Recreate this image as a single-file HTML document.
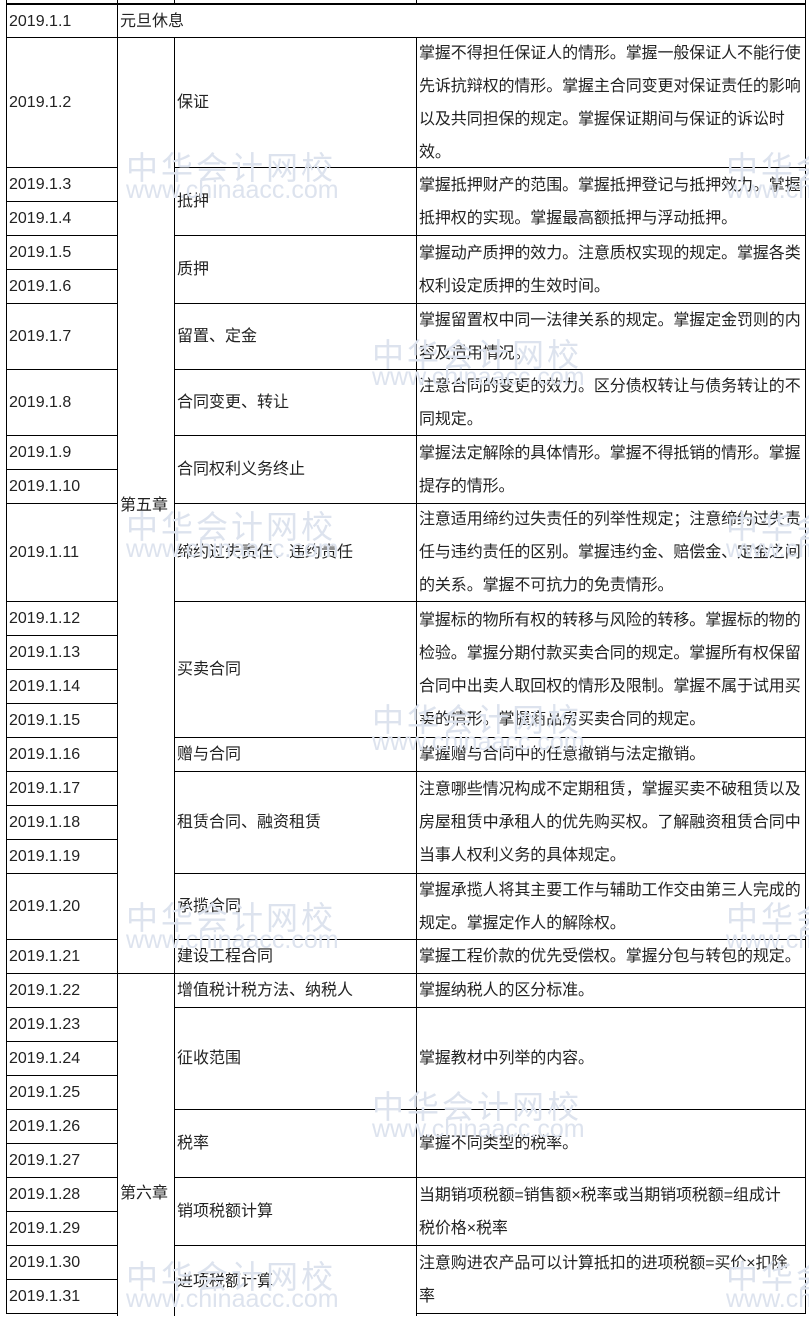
<!DOCTYPE html>
<html style="overflow:hidden;height:1317px"><head><meta charset="utf-8"><style>
body{margin:0;width:809px;height:1317px;overflow:hidden;background:#fff;font-family:"Liberation Sans","Noto Sans CJK SC",sans-serif;color:#222;font-size:16px;position:relative}
.c{position:absolute;border:1px solid #000;box-sizing:border-box;display:flex;align-items:center;padding-left:2px;line-height:33px;margin:-1px 0 0 -1px}
.d{padding-left:2px;padding-right:0;font-size:16px;letter-spacing:-0.1px}
.w{position:absolute;color:#dde3ee;font-size:32px;letter-spacing:3px;z-index:5;pointer-events:none;white-space:nowrap}
.u{position:absolute;color:#dde3ee;font-size:25px;z-index:5;white-space:nowrap}
</style></head><body>
<div class="c" style="left:7px;top:-30px;width:112px;height:35px"></div>
<div class="c" style="left:118px;top:-30px;width:58px;height:35px"></div>
<div class="c" style="left:175px;top:-30px;width:243px;height:35px"></div>
<div class="c" style="left:417px;top:-30px;width:390px;height:35px"></div>

<div class="c" style="left:7px;top:5px;width:112px;height:34px">2019.1.1</div>
<div class="c" style="left:118px;top:5px;width:689px;height:34px">元旦休息</div>

<div class="c" style="left:7px;top:38px;width:112px;height:131px">2019.1.2</div>
<div class="c" style="left:7px;top:168px;width:112px;height:35px">2019.1.3</div>
<div class="c" style="left:7px;top:202px;width:112px;height:35px">2019.1.4</div>
<div class="c" style="left:7px;top:236px;width:112px;height:35px">2019.1.5</div>
<div class="c" style="left:7px;top:270px;width:112px;height:35px">2019.1.6</div>
<div class="c" style="left:7px;top:304px;width:112px;height:67px">2019.1.7</div>
<div class="c" style="left:7px;top:370px;width:112px;height:67px">2019.1.8</div>
<div class="c" style="left:7px;top:436px;width:112px;height:35px">2019.1.9</div>
<div class="c" style="left:7px;top:470px;width:112px;height:35px">2019.1.10</div>
<div class="c" style="left:7px;top:504px;width:112px;height:99px">2019.1.11</div>
<div class="c" style="left:7px;top:602px;width:112px;height:35px">2019.1.12</div>
<div class="c" style="left:7px;top:636px;width:112px;height:35px">2019.1.13</div>
<div class="c" style="left:7px;top:670px;width:112px;height:35px">2019.1.14</div>
<div class="c" style="left:7px;top:704px;width:112px;height:35px">2019.1.15</div>
<div class="c" style="left:7px;top:738px;width:112px;height:35px">2019.1.16</div>
<div class="c" style="left:7px;top:772px;width:112px;height:35px">2019.1.17</div>
<div class="c" style="left:7px;top:806px;width:112px;height:35px">2019.1.18</div>
<div class="c" style="left:7px;top:840px;width:112px;height:35px">2019.1.19</div>
<div class="c" style="left:7px;top:874px;width:112px;height:67px">2019.1.20</div>
<div class="c" style="left:7px;top:940px;width:112px;height:35px">2019.1.21</div>
<div class="c" style="left:7px;top:974px;width:112px;height:35px">2019.1.22</div>
<div class="c" style="left:7px;top:1008px;width:112px;height:35px">2019.1.23</div>
<div class="c" style="left:7px;top:1042px;width:112px;height:35px">2019.1.24</div>
<div class="c" style="left:7px;top:1076px;width:112px;height:35px">2019.1.25</div>
<div class="c" style="left:7px;top:1110px;width:112px;height:35px">2019.1.26</div>
<div class="c" style="left:7px;top:1144px;width:112px;height:35px">2019.1.27</div>
<div class="c" style="left:7px;top:1178px;width:112px;height:35px">2019.1.28</div>
<div class="c" style="left:7px;top:1212px;width:112px;height:35px">2019.1.29</div>
<div class="c" style="left:7px;top:1246px;width:112px;height:35px">2019.1.30</div>
<div class="c" style="left:7px;top:1280px;width:112px;height:35px">2019.1.31</div>

<div class="c" style="left:118px;top:38px;width:58px;height:937px">第五章</div>
<div class="c" style="left:118px;top:974px;width:58px;height:343px;border-bottom:none;align-items:flex-start;padding-top:203px">第六章</div>

<div class="c" style="left:175px;top:38px;width:243px;height:131px">保证</div>
<div class="c" style="left:175px;top:168px;width:243px;height:69px">抵押</div>
<div class="c" style="left:175px;top:236px;width:243px;height:69px">质押</div>
<div class="c" style="left:175px;top:304px;width:243px;height:67px">留置、定金</div>
<div class="c" style="left:175px;top:370px;width:243px;height:67px">合同变更、转让</div>
<div class="c" style="left:175px;top:436px;width:243px;height:69px">合同权利义务终止</div>
<div class="c" style="left:175px;top:504px;width:243px;height:99px">缔约过失责任、违约责任</div>
<div class="c" style="left:175px;top:602px;width:243px;height:137px">买卖合同</div>
<div class="c" style="left:175px;top:738px;width:243px;height:35px">赠与合同</div>
<div class="c" style="left:175px;top:772px;width:243px;height:103px">租赁合同、融资租赁</div>
<div class="c" style="left:175px;top:874px;width:243px;height:67px">承揽合同</div>
<div class="c" style="left:175px;top:940px;width:243px;height:35px">建设工程合同</div>
<div class="c" style="left:175px;top:974px;width:243px;height:35px">增值税计税方法、纳税人</div>
<div class="c" style="left:175px;top:1008px;width:243px;height:103px">征收范围</div>
<div class="c" style="left:175px;top:1110px;width:243px;height:69px">税率</div>
<div class="c" style="left:175px;top:1178px;width:243px;height:69px">销项税额计算</div>
<div class="c" style="left:175px;top:1246px;width:243px;height:71px;border-bottom:none">进项税额计算</div>

<div class="c d" style="left:417px;top:38px;width:390px;height:131px">掌握不得担任保证人的情形。掌握一般保证人不能行使先诉抗辩权的情形。掌握主合同变更对保证责任的影响以及共同担保的规定。掌握保证期间与保证的诉讼时效。</div>
<div class="c d" style="left:417px;top:168px;width:390px;height:69px">掌握抵押财产的范围。掌握抵押登记与抵押效力。掌握抵押权的实现。掌握最高额抵押与浮动抵押。</div>
<div class="c d" style="left:417px;top:236px;width:390px;height:69px">掌握动产质押的效力。注意质权实现的规定。掌握各类权利设定质押的生效时间。</div>
<div class="c d" style="left:417px;top:304px;width:390px;height:67px">掌握留置权中同一法律关系的规定。掌握定金罚则的内容及适用情况。</div>
<div class="c d" style="left:417px;top:370px;width:390px;height:67px">注意合同的变更的效力。区分债权转让与债务转让的不同规定。</div>
<div class="c d" style="left:417px;top:436px;width:390px;height:69px">掌握法定解除的具体情形。掌握不得抵销的情形。掌握提存的情形。</div>
<div class="c d" style="left:417px;top:504px;width:390px;height:99px">注意适用缔约过失责任的列举性规定；注意缔约过失责任与违约责任的区别。掌握违约金、赔偿金、定金之间的关系。掌握不可抗力的免责情形。</div>
<div class="c d" style="left:417px;top:602px;width:390px;height:137px">掌握标的物所有权的转移与风险的转移。掌握标的物的检验。掌握分期付款买卖合同的规定。掌握所有权保留合同中出卖人取回权的情形及限制。掌握不属于试用买卖的情形。掌握商品房买卖合同的规定。</div>
<div class="c d" style="left:417px;top:738px;width:390px;height:35px">掌握赠与合同中的任意撤销与法定撤销。</div>
<div class="c d" style="left:417px;top:772px;width:390px;height:103px">注意哪些情况构成不定期租赁，掌握买卖不破租赁以及房屋租赁中承租人的优先购买权。了解融资租赁合同中当事人权利义务的具体规定。</div>
<div class="c d" style="left:417px;top:874px;width:390px;height:67px">掌握承揽人将其主要工作与辅助工作交由第三人完成的规定。掌握定作人的解除权。</div>
<div class="c d" style="left:417px;top:940px;width:390px;height:35px">掌握工程价款的优先受偿权。掌握分包与转包的规定。</div>
<div class="c d" style="left:417px;top:974px;width:390px;height:35px">掌握纳税人的区分标准。</div>
<div class="c d" style="left:417px;top:1008px;width:390px;height:103px">掌握教材中列举的内容。</div>
<div class="c d" style="left:417px;top:1110px;width:390px;height:69px">掌握不同类型的税率。</div>
<div class="c d" style="left:417px;top:1178px;width:390px;height:69px"><span>当期销项税额=销售额×税率或当期销项税额=组成计<br>税价格×税率</span></div>
<div class="c d" style="left:417px;top:1246px;width:390px;height:69px"><span>注意购进农产品可以计算抵扣的进项税额=买价×扣除<br>率</span></div>

<div class="w" style="left:126px;top:143px">中华会计网校</div><div class="u" style="left:126px;top:176px">www.chinaacc.com</div>
<div class="w" style="left:726px;top:143px">中华会计网校</div><div class="u" style="left:726px;top:176px">www.chinaacc.com</div>
<div class="w" style="left:372px;top:330px">中华会计网校</div><div class="u" style="left:372px;top:363px">www.chinaacc.com</div>
<div class="w" style="left:126px;top:502px">中华会计网校</div><div class="u" style="left:126px;top:535px">www.chinaacc.com</div>
<div class="w" style="left:726px;top:502px">中华会计网校</div><div class="u" style="left:726px;top:535px">www.chinaacc.com</div>
<div class="w" style="left:372px;top:695px">中华会计网校</div><div class="u" style="left:372px;top:728px">www.chinaacc.com</div>
<div class="w" style="left:126px;top:893px">中华会计网校</div><div class="u" style="left:126px;top:926px">www.chinaacc.com</div>
<div class="w" style="left:726px;top:893px">中华会计网校</div><div class="u" style="left:726px;top:926px">www.chinaacc.com</div>
<div class="w" style="left:372px;top:1082px">中华会计网校</div><div class="u" style="left:372px;top:1115px">www.chinaacc.com</div>
<div class="w" style="left:126px;top:1252px">中华会计网校</div><div class="u" style="left:126px;top:1285px">www.chinaacc.com</div>
<div class="w" style="left:726px;top:1252px">中华会计网校</div><div class="u" style="left:726px;top:1285px">www.chinaacc.com</div>
</body></html>
